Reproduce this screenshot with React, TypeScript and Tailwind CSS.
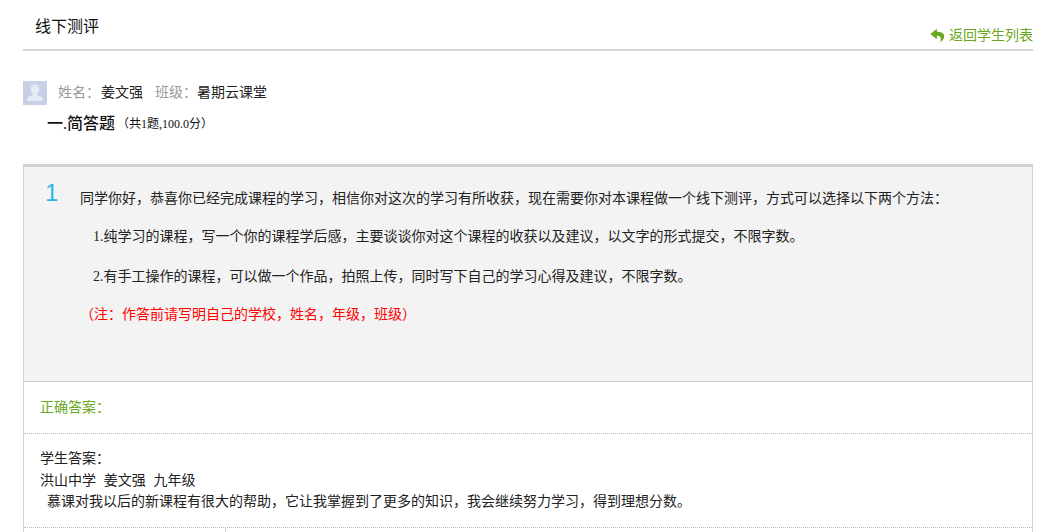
import React from 'react';

const sans = 'font-["Liberation_Sans","Noto_Sans_CJK_SC",sans-serif]';
const serif = 'font-["Liberation_Serif","Noto_Sans_CJK_SC",serif]';

const BackIcon: React.FC = () => (
  <svg viewBox="0 0 14 14" className="h-[15px] w-[15px] shrink-0 text-[#6aa822]" fill="currentColor">
    <path d="M6.4 0.6 L0.3 5.6 L6.4 10.4 L6.4 7.3 C9.2 7.2 10.6 8.6 10 12 L9.4 13.6 C12.6 11.4 13.8 8.8 13 6.4 C12.2 4.2 9.8 3.4 6.4 3.5 Z" />
  </svg>
);

const Avatar: React.FC = () => (
  <div className="h-6 w-6 shrink-0 bg-[#c7d0e4]">
    <svg viewBox="0 0 24 24" className="h-6 w-6 text-[#e6eaf3]" fill="currentColor">
      <path d="M12 3.5c-2.7 0-4.2 2-4.2 4.6 0 2 .8 3.7 2 4.7v1.4c-2.600 .8-5 1.600-5.600 3.200-.2.6-.2 1.600-.2 2.600h16c0-1 0-2-.2-2.600-.6-1.600-3-2.400-5.600-3.200v-1.400c1.200-1 2-2.700 2-4.700 0-2.600-1.500-4.600-4.200-4.600z" />
    </svg>
  </div>
);

export default function App() {
  return (
    <div className={`h-[532px] overflow-hidden bg-white pl-[23px] pr-[9px] text-[14px] text-[#222] ${sans}`}>
      <header className="flex h-[51px] items-start justify-between border-b-2 border-[#d5d5d5] pl-[12px]">
        <h2 className="mt-[17px] text-[16px] leading-[20px] font-normal text-[#111]">线下测评</h2>
        <a className="mt-[25px] flex items-center gap-[4px] text-[14px] leading-[20px] text-[#6aa822]">
          <BackIcon />
          返回学生列表
        </a>
      </header>

      <div className="mt-[30px] flex h-6 items-center">
        <Avatar />
        <div className="-mt-[2px] ml-[11px] flex items-center">
          <span className="text-[#999]">姓名：</span>
          <span className="ml-px text-[#222]">姜文强</span>
          <span className="ml-[12px] text-[#999]">班级：</span>
          <span className="text-[#222]">暑期云课堂</span>
        </div>
      </div>

      <div className={`mt-[9px] flex h-[20px] items-center pl-[24px] text-[#111] ${serif}`}>
        <span className="text-[16px] font-medium">一.简答题</span>
        <span className="ml-[2px] text-[12px]">（共1题,100.0分）</span>
      </div>

      <section className="mt-[30px] border-x border-t-[3px] border-[#d2d2d2]">
        <div className={`relative h-[215px] border-b border-[#cfcfcf] bg-[#f3f3f3] pl-[56px] text-[14px] text-[#222] ${serif}`}>
          <span className={`absolute top-[12px] left-[21px] text-[24px] leading-[28px] text-[#2bb5e8] ${sans}`}>1</span>
          <p className="pt-[22px] leading-[20px]">同学你好，恭喜你已经完成课程的学习，相信你对这次的学习有所收获，现在需要你对本课程做一个线下测评，方式可以选择以下两个方法：</p>
          <p className="mt-[18px] pl-[13px] leading-[20px]">1.纯学习的课程，写一个你的课程学后感，主要谈谈你对这个课程的收获以及建议，以文字的形式提交，不限字数。</p>
          <p className="mt-[20px] pl-[13px] leading-[20px]">2.有手工操作的课程，可以做一个作品，拍照上传，同时写下自己的学习心得及建议，不限字数。</p>
          <p className="mt-[18px] leading-[20px] text-[#ff0000]">（注：作答前请写明自己的学校，姓名，年级，班级）</p>
        </div>
        <div className="flex h-[52px] items-center border-b border-dotted border-[#bbb] pl-[16px] text-[#6aa822]">正确答案：</div>
        <div className="h-[94px] border-b border-dotted border-[#bbb] pt-[14px] pl-[16px] leading-[21.500px] text-[#222]">
          <p>学生答案：</p>
          <p>洪山中学&nbsp;&nbsp;姜文强&nbsp;&nbsp;九年级</p>
          <p className="pl-[7px]">慕课对我以后的新课程有很大的帮助，它让我掌握到了更多的知识，我会继续努力学习，得到理想分数。</p>
        </div>
        <div className="h-[10px] w-[202px] border-r border-[#cfcfcf]" />
      </section>
    </div>
  );
}
